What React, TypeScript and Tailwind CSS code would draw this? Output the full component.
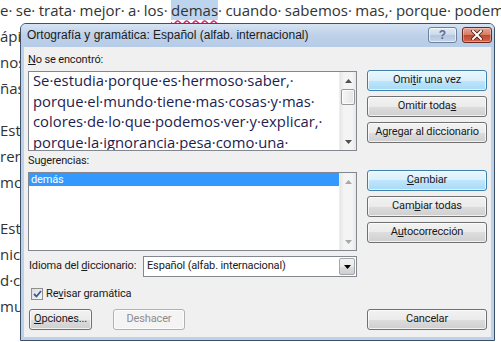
import React from "react";

function U({ children }: { children: React.ReactNode }) {
  return <span className="underline underline-offset-[1px]">{children}</span>;
}

function Btn({
  children,
  variant = "normal",
  className = "",
}: {
  children: React.ReactNode;
  variant?: "normal" | "default" | "disabled";
  className?: string;
}) {
  const v =
    variant === "default"
      ? "border-[#3c7fb1] bg-[linear-gradient(#eaf6fd_0%,#d9f0fc_50%,#bee6fd_50%,#a7d9f5_100%)] text-[#1a1a1a]"
      : variant === "disabled"
      ? "border-[#adb2b5] bg-[#f4f4f4] text-[#8d8d8d]"
      : "border-[#707070] bg-[linear-gradient(#f2f2f2_0%,#ebebeb_50%,#dddddd_50%,#cfcfcf_100%)] text-[#1a1a1a]";
  return (
    <div
      className={`h-[21px] rounded-[3px] border flex items-center justify-center shadow-[inset_0_0_0_1px_rgba(255,255,255,0.7)] ${v} ${className}`}
    >
      {children}
    </div>
  );
}

function VScroll({ thumb, disabled }: { thumb?: boolean; disabled?: boolean }) {
  const c = disabled ? "#a8a8a8" : "#505050";
  return (
    <div className="w-[17px] h-full bg-[linear-gradient(90deg,#e6e6e6,#f4f4f4_25%,#f4f4f4_75%,#e6e6e6)] flex flex-col border-l border-[#eeeeee]">
      <div className="h-[17px] flex items-center justify-center">
        <svg width="7" height="4" viewBox="0 0 7 4">
          <path d="M0 4 L3.5 0 L7 4Z" fill={c} />
        </svg>
      </div>
      <div className="flex-1">
        {thumb && (
          <div className="mx-[1px] h-[16px] rounded-[2px] border border-[#979797] bg-[linear-gradient(90deg,#f6f6f6,#e4e4e4)] shadow-[inset_0_0_0_1px_rgba(255,255,255,0.8)]" />
        )}
      </div>
      <div className="h-[17px] flex items-center justify-center">
        <svg width="7" height="4" viewBox="0 0 7 4">
          <path d="M0 0 L3.5 4 L7 0Z" fill={c} />
        </svg>
      </div>
    </div>
  );
}

export default function App() {
  return (
    <div className="relative w-[501px] h-[342px] overflow-hidden bg-white">
      {/* Document background */}
      <div className="font-['Open_Sans',sans-serif] text-[15px] text-[#333333] -mt-[3px]">
        <div className="h-[26px] leading-[26px] whitespace-nowrap [word-spacing:-0.5px]">
          e· se· trata· mejor· a· los·{" "}
          <span className="bg-[#bcd4ee] underline decoration-wavy decoration-[#d0306a] underline-offset-[3px]">demas</span>· cuando· sabemos·
          mas,· porque· podemos
        </div>
        <div className="h-[26px] leading-[26px] whitespace-nowrap">ápidamente· y· con· mayor· facilidad· lo· que· nos· rodea· Diarios</div>
        <div className="h-[26px] leading-[26px] whitespace-nowrap">nos· y· así· podemos· crecer· Diariamente· Diarios</div>
        <div className="h-[26px] leading-[26px] whitespace-nowrap">ñas· para· aprender· más· y· mejor· cada· día· Diarios</div>
        <div className="mt-[16px]">
          <div className="h-[26px] leading-[26px] whitespace-nowrap">Estudiamos· para· comprender· el· mundo· que· nos· Cuenta</div>
          <div className="h-[26px] leading-[26px] whitespace-nowrap">rendimos· a· pensar· y· a· conocer· lo· que· somos· ideas</div>
          <div className="h-[26px] leading-[26px] whitespace-nowrap">mos· libres· gracias· al· saber· de· los· demás· Fin</div>
        </div>
        <div className="mt-[20px]">
          <div className="h-[26px] leading-[26px] whitespace-nowrap">Estudiamos· porque· la· vida· nos· enseña· algo· nuevo</div>
          <div className="h-[26px] leading-[26px] whitespace-nowrap">nicación· entre· las· personas· y· los· pueblos· Fin</div>
          <div className="h-[26px] leading-[26px] whitespace-nowrap">d·con· los· demás· para· vivir· mejor· juntos· mejor</div>
          <div className="h-[26px] leading-[26px] whitespace-nowrap">mundo· y· de· todos· los· que· lo· habitan· mundo</div>
        </div>
      </div>

      {/* Dialog window */}
      <div className="absolute left-[20px] top-[23px] w-[475px] h-[318px] rounded-t-[6px] border border-[#3e4f66] bg-[#bcd1ea] flex flex-col">
        {/* Title bar */}
        <div className="h-[23px] rounded-t-[5px] bg-[linear-gradient(#d6e3f3,#bfd2ea_45%,#b6cbe6)] flex items-start pl-[6px] pr-[2px] pt-[3px]">
          <div className="flex-1 font-['Liberation_Sans',sans-serif] text-[12px] leading-[16px] text-[#1c1c1c]">
            Ortografía y gramática: Español (alfab. internacional)
          </div>
          <div className="flex gap-[5px]">
            <div className="w-[29px] h-[16px] rounded-[3px] border border-[#6f8199] bg-[linear-gradient(#e4ecf6,#cad8ea_50%,#b4c7df_50%,#c3d4ea)] shadow-[inset_0_0_0_1px_rgba(255,255,255,0.6)] flex items-center justify-center">
              <span className="font-['Liberation_Sans',sans-serif] font-bold text-[12px] leading-none text-[#5c6f8c]">?</span>
            </div>
            <div className="w-[30px] h-[16px] rounded-[3px] border border-[#6b2a20] bg-[linear-gradient(#e8a493,#d67a63_50%,#c2452d_50%,#d5674a)] shadow-[inset_0_0_0_1px_rgba(255,255,255,0.35)] flex items-center justify-center">
              <svg width="12" height="10" viewBox="0 0 12 10">
                <path d="M2 1 L10 9 M10 1 L2 9" stroke="#4a1a10" strokeWidth="3.6" strokeLinecap="square" />
                <path d="M2 1 L10 9 M10 1 L2 9" stroke="#ffffff" strokeWidth="2" strokeLinecap="square" />
              </svg>
            </div>
          </div>
        </div>

        {/* Client area */}
        <div className="mx-[3px] w-[467px] h-[290px] bg-[#f0f0f0] flex pl-[4px] pr-[4px] font-['Roboto',sans-serif] text-[11px] tracking-[-0.15px] text-[#1a1a1a]">
          {/* Left column */}
          <div className="w-[329px] flex flex-col pt-[5px]">
            <div className="h-[15px] leading-[15px]">
              <U>N</U>o se encontró:
            </div>
            <div className="mt-[4px] h-[80px] border border-[#828790] bg-white flex">
              <div className="flex-1 overflow-hidden pl-[4px] font-['Open_Sans',sans-serif] text-[14.8px] tracking-normal leading-[20.5px] text-[#1d1d4f]">
                <div className="-mt-[2px] whitespace-nowrap">
                  <div>Se·estudia·porque·es·hermoso·saber,·</div>
                  <div>porque·el·mundo·tiene·mas·cosas·y·mas·</div>
                  <div>colores·de·lo·que·podemos·ver·y·explicar,·</div>
                  <div>porque·la·ignorancia·pesa·como·una·</div>
                  <div>losa·sobre·el·alma·del·que·no·sabe·</div>
                </div>
              </div>
              <VScroll thumb />
            </div>
            <div className="mt-[2px] h-[15px] leading-[15px]">
              Su<U>g</U>erencias:
            </div>
            <div className="mt-[4px] h-[79px] border border-[#828790] bg-white flex">
              <div className="flex-1">
                <div className="h-[13px] leading-[13px] bg-[#3399ff] text-white pl-[2px]">demás</div>
              </div>
              <VScroll disabled />
            </div>
            <div className="mt-[5px] h-[21px] flex items-center">
              <div className="w-[115px] pl-[1px]">
                Idioma del <U>d</U>iccionario:
              </div>
              <div className="flex-1 h-[21px] border border-[#828790] bg-white flex items-center">
                <div className="flex-1 pl-[3px]">Español (alfab. internacional)</div>
                <div className="w-[16px] h-[17px] mr-[1px] border border-[#a5a5a5] rounded-[2px] bg-[linear-gradient(#f2f2f2,#ebebeb_50%,#dddddd_50%,#cfcfcf)] flex items-center justify-center">
                  <svg width="7" height="4" viewBox="0 0 7 4">
                    <path d="M0 0 L3.5 4 L7 0Z" fill="#000000" />
                  </svg>
                </div>
              </div>
            </div>
            <div className="mt-[10px] h-[14px] flex items-center pl-[3px]">
              <div className="w-[12px] h-[12px] border border-[#8f8f8f] bg-[linear-gradient(135deg,#dcdcdc,#f6f6f6)] flex items-center justify-center">
                <svg width="9" height="8" viewBox="0 0 9 8">
                  <path d="M1 4 L3.5 6.5 L8 1" stroke="#3d5a98" strokeWidth="1.8" fill="none" />
                </svg>
              </div>
              <div className="ml-[3px]">
                Re<U>v</U>isar gramática
              </div>
            </div>
            <div className="mt-[8px] flex pl-[1px]">
              <Btn className="w-[63px]">
                <span>
                  <U>O</U>pciones...
                </span>
              </Btn>
              <Btn variant="disabled" className="w-[72px] ml-[21px]">
                Deshacer
              </Btn>
            </div>
          </div>

          {/* Right column */}
          <div className="w-[120px] ml-[10px] flex flex-col pt-[23px] pb-[7px]">
            <Btn variant="default">
              <span>
                Omi<U>t</U>ir una vez
              </span>
            </Btn>
            <Btn className="mt-[5px]">
              <span>
                Omitir toda<U>s</U>
              </span>
            </Btn>
            <Btn className="mt-[5px]">
              <span>
                A<U>g</U>regar al diccionario
              </span>
            </Btn>
            <Btn variant="default" className="mt-[27px]">
              <span>
                <U>C</U>ambiar
              </span>
            </Btn>
            <Btn className="mt-[5px]">
              <span>
                Cam<U>b</U>iar todas
              </span>
            </Btn>
            <Btn className="mt-[5px]">
              <span>
                A<U>u</U>tocorrección
              </span>
            </Btn>
            <Btn className="mt-auto">Cancelar</Btn>
          </div>
        </div>
      </div>
    </div>
  );
}
